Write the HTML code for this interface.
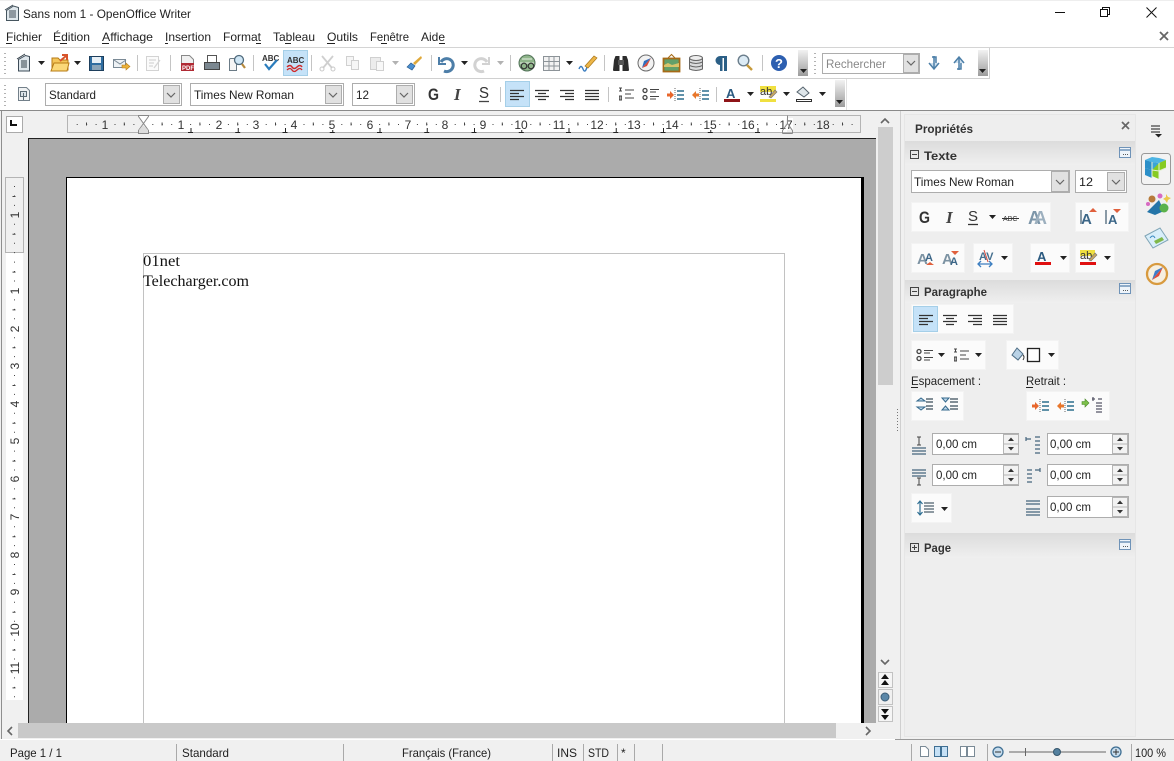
<!DOCTYPE html>
<html lang="fr"><head><meta charset="utf-8"><title>Sans nom 1 - OpenOffice Writer</title>
<style>
html,body{margin:0;padding:0;background:#fff;width:1174px;height:761px;overflow:hidden}
svg{display:block;position:absolute;left:0;top:0}
text{font-family:"Liberation Sans",sans-serif;font-size:12px;fill:#222}
.b{font-weight:bold;fill:#333}
.r{font-size:12px;fill:#333;text-anchor:middle}
.d{font-family:"Liberation Serif",serif;font-size:16px;fill:#111}
.sep{stroke:#c4c4c4;stroke-width:1}
.cb{fill:#fff;stroke:#adadad}
.dd{fill:#e1e1e1;stroke:#adadad}
.tb{fill:#fbfbfb;stroke:#f3f3f3}
.act{fill:#c5e2f8;stroke:#a5cfe8}
.u{stroke:#222;stroke-width:1}
</style></head><body>
<svg width="1174" height="761" viewBox="0 0 1174 761" xmlns="http://www.w3.org/2000/svg">
<defs>
<linearGradient id="grip" x1="0" y1="0" x2="0" y2="1"><stop offset="0" stop-color="#f2f2f2"/><stop offset="1" stop-color="#9c9c9c"/></linearGradient>
<linearGradient id="hd" x1="0" y1="0" x2="0" y2="1"><stop offset="0" stop-color="#dcdcdc"/><stop offset="1" stop-color="#efefef"/></linearGradient>
<symbol id="ar" viewBox="0 0 8 4" width="8" height="4" overflow="visible"><path d="M0 0h7l-3.5 4z" fill="#222"/></symbol>
<symbol id="chev" viewBox="0 0 16 20" width="16" height="20"><path d="M4 8l4 4 4-4" fill="none" stroke="#666" stroke-width="1.2"/></symbol>
<symbol id="al" viewBox="0 0 16 12" width="16" height="12"><path d="M1 1.5h14M1 4.5h9M1 7.5h14M1 10.5h9" stroke="#333" stroke-width="1.2"/></symbol>
<symbol id="ac" viewBox="0 0 16 12" width="16" height="12"><path d="M1 1.5h14M4 4.5h8M1 7.5h14M4 10.5h8" stroke="#333" stroke-width="1.2"/></symbol>
<symbol id="ax" viewBox="0 0 16 12" width="16" height="12"><path d="M1 1.5h14M6 4.5h9M1 7.5h14M6 10.5h9" stroke="#333" stroke-width="1.2"/></symbol>
<symbol id="aj" viewBox="0 0 16 12" width="16" height="12"><path d="M1 1.5h14M1 4.5h14M1 7.5h14M1 10.5h14" stroke="#333" stroke-width="1.2"/></symbol>
<symbol id="num" viewBox="0 0 18 14" width="18" height="14"><path d="M2 1h3M3.500 1v3M2 4h3M2 9h3M2.700 9v4M4.300 9v4M2 13h3M8 3h9M8 7h6M8 11h9" stroke="#444" fill="none"/></symbol>
<symbol id="bul" viewBox="0 0 18 14" width="18" height="14"><circle cx="3" cy="3.500" r="2" fill="none" stroke="#444" stroke-width="1.300"/><circle cx="3" cy="10.500" r="2" fill="none" stroke="#444" stroke-width="1.300"/><path d="M8 2.500h9M8 5h6M8 9.500h9M8 12h6" stroke="#444"/></symbol>
<symbol id="ind" viewBox="0 0 18 16" width="18" height="16"><path d="M8 1v14" stroke="#666" stroke-dasharray="1 1"/><path d="M10 4h7M10 8h7M10 12h7" stroke="#2d6f8e" stroke-width="1.600"/><path d="M7 8L3 4v2.500H0v3h3V12z" fill="#e8672c"/></symbol>
<symbol id="oud" viewBox="0 0 18 16" width="18" height="16"><path d="M8 1v14" stroke="#666" stroke-dasharray="1 1"/><path d="M10 4h7M10 8h7M10 12h7" stroke="#2d6f8e" stroke-width="1.600"/><path d="M0 8l4-4v2.500h3v3H4V12z" fill="#e8772c"/></symbol>
<symbol id="spin" viewBox="0 0 16 20" width="16" height="20"><rect x=".5" y=".5" width="15" height="19" fill="#f2f2f2" stroke="#b5b5b5"/><path d="M1 10h14" stroke="#b5b5b5"/><path d="M5 7l3-3.500L11 7z" fill="#333"/><path d="M5 13l3 3.500 3-3.500z" fill="#333"/></symbol>
<symbol id="more" viewBox="0 0 12 11" width="12" height="11"><rect x=".5" y=".5" width="11" height="10" fill="#eef4fa" stroke="#6f93b8"/><path d="M1 3h10" stroke="#6f93b8" stroke-width="1.500"/><path d="M4 7.500h.8M6 7.500h.8M8 7.500h.8" stroke="#333"/></symbol>
</defs>

<!-- base -->
<rect width="1174" height="761" fill="#fff"/>
<rect y="0" width="1174" height="1" fill="#eee"/>

<!-- title bar -->
<path d="M6.500 10.500l7-4.500 5 1.500v13h-12z" fill="#dfe7ec" stroke="#46555f"/><path d="M5 10l8-5M9 11h7M9 13h7M9 15h7M9 17h7" stroke="#3c4a55" fill="none"/>
<text x="23" y="18" textLength="168" lengthAdjust="spacingAndGlyphs">Sans nom 1 - OpenOffice Writer</text>
<path d="M1055 12.500h10" stroke="#111"/>
<path d="M1100.500 9.500h7v7h-7zM1102.500 9.500v-2h7v7h-2" fill="none" stroke="#111"/>
<path d="M1146.500 7.500l10 10M1156.500 7.500l-10 10" stroke="#111" fill="none"/>

<!-- menu -->
<text x="6" y="41" textLength="36" lengthAdjust="spacingAndGlyphs">Fichier</text><path class="u" d="M6 43.500h6"/>
<text x="53" y="41" textLength="37" lengthAdjust="spacingAndGlyphs">Édition</text><path class="u" d="M60 43.500h7"/>
<text x="102" y="41" textLength="51" lengthAdjust="spacingAndGlyphs">Affichage</text><path class="u" d="M102 43.500h7"/>
<text x="165" y="41" textLength="46" lengthAdjust="spacingAndGlyphs">Insertion</text><path class="u" d="M165 43.500h3"/>
<text x="223" y="41" textLength="38" lengthAdjust="spacingAndGlyphs">Format</text><path class="u" d="M256 43.500h5"/>
<text x="273" y="41" textLength="42" lengthAdjust="spacingAndGlyphs">Tableau</text><path class="u" d="M285 43.500h6"/>
<text x="327" y="41" textLength="31" lengthAdjust="spacingAndGlyphs">Outils</text><path class="u" d="M327 43.500h8"/>
<text x="370" y="41" textLength="39" lengthAdjust="spacingAndGlyphs">Fenêtre</text><path class="u" d="M381 43.500h6"/>
<text x="421" y="41" textLength="24" lengthAdjust="spacingAndGlyphs">Aide</text><path class="u" d="M439 43.500h6"/>
<path d="M1160 32l8 8M1168 32l-8 8" stroke="#666" stroke-width="1.800"/>

<!-- toolbar frames -->
<rect x="0" y="47" width="1174" height="1" fill="#d4d4d4"/>
<rect x="0" y="78" width="990" height="1" fill="#d0d0d0"/>
<rect x="989" y="48" width="1" height="30" fill="#d0d0d0"/>
<rect x="846" y="79" width="1" height="31" fill="#e2e2e2"/>
<rect x="798" y="50" width="10" height="26" fill="url(#grip)"/><use href="#ar" x="800" y="69"/>
<rect x="978" y="50" width="10" height="26" fill="url(#grip)"/><use href="#ar" x="979" y="69"/>
<rect x="835" y="80" width="10" height="27" fill="url(#grip)"/><use href="#ar" x="836" y="100"/>
<path d="M5 53v22" stroke="#666" stroke-dasharray="1 3"/>
<path d="M5 85v22" stroke="#666" stroke-dasharray="1 3"/>
<path d="M815 53v22" stroke="#666" stroke-dasharray="1 3"/>

<!-- toolbar 1 icons -->
<g class="sep"><path d="M137.500 55v16M170.500 55v16M253.500 55v16M311.500 55v16M431.500 55v16M510.500 55v16M604.500 55v16M762.500 55v16"/></g>
<path d="M18.500 59.500l7-4 4 1v14.500h-11z" fill="#dfe7ec" stroke="#3e4c58"/><path d="M17 59l8-5M21 61h6M21 63h6M21 65h6M21 67h6" stroke="#2f3c46" fill="none"/><use href="#ar" x="38" y="61"/>
<path d="M52 58h6l2 2h8v10H52z" fill="#f4c65a" stroke="#b77b15"/><path d="M51 71l3-8h15l-2 8z" fill="#fbd878" stroke="#b77b15"/><path d="M60 61l6-5M62 55h5v5" stroke="#d8542b" stroke-width="2" fill="none"/><use href="#ar" x="74" y="61"/>
<rect x="89.500" y="56.500" width="14" height="14" fill="#2f6da0" stroke="#1d3e5c"/><rect x="92" y="57" width="9" height="6" fill="#e8f0f6"/><rect x="92" y="65" width="9" height="5" fill="#8aa4b8"/>
<rect x="113.500" y="59.500" width="12" height="8" fill="#eef2f5" stroke="#7b8a96"/><path d="M114 60l6 4 6-4" fill="none" stroke="#7b8a96"/><path d="M122 65h4v-2l4 3.500-4 3.500v-2h-4z" fill="#eab13a" stroke="#b77b15" stroke-width=".6"/>
<rect x="146.500" y="56.500" width="12" height="14" fill="#fbfbfb" stroke="#d3d3d3"/><path d="M149 60h7M149 63h5M149 66h4M154 68l6-8" stroke="#d5d5d5" stroke-width="1.300"/>
<path d="M181.500 55.500h8l4 4v11h-12z" fill="#f0f0f0" stroke="#888"/><rect x="181" y="63" width="13" height="8" fill="#b02a34"/><text x="182" y="70" style="font-size:6px;font-weight:bold;fill:#fff">PDF</text>
<rect x="207.500" y="55.500" width="9" height="8" fill="#fff" stroke="#555"/><rect x="204.500" y="62.500" width="15" height="7" fill="#7b8790" stroke="#444"/>
<path d="M230.500 58.500h6v12h-7V59z" fill="#f5f5f5" stroke="#6b7b86"/><circle cx="239" cy="60" r="4.500" fill="#cfe6f5" stroke="#506a7c" stroke-width="1.300"/><path d="M242 64l3 4" stroke="#b78a3d" stroke-width="2.200"/>
<text x="262" y="61" style="font-size:8px;font-weight:bold;fill:#333">ABC</text><path d="M265 64l4 5 8-9" fill="none" stroke="#2b7dbd" stroke-width="2.200"/>
<rect x="283.500" y="50.500" width="24" height="25" class="act"/><text x="287" y="63" style="font-size:8px;font-weight:bold;fill:#333">ABC</text><path d="M287 67q3-3 5 0t5 0 5 0" fill="none" stroke="#d02a2a" stroke-width="1.500"/><path d="M287 70q3-3 5 0t5 0 5 0" fill="none" stroke="#d02a2a" stroke-width="1.300"/>
<path d="M322 56l10 12M333 56l-10 12" stroke="#cfcfcf" stroke-width="1.800"/><circle cx="322" cy="69" r="2" fill="none" stroke="#c9c9c9"/><circle cx="333" cy="69" r="2" fill="none" stroke="#c9c9c9"/>
<rect x="346.500" y="56.500" width="7" height="9" fill="#f6f6f6" stroke="#d0d0d0"/><rect x="351.500" y="60.500" width="7" height="9" fill="#f6f6f6" stroke="#d0d0d0"/>
<rect x="370.500" y="57.500" width="10" height="12" fill="#ececec" stroke="#d0d0d0"/><rect x="376.500" y="61.500" width="7" height="9" fill="#f8f8f8" stroke="#d0d0d0"/><use href="#ar" x="392" y="61" opacity=".35"/>
<path d="M407 67l5 3 3-4-4-3z" fill="#4a8fd1" stroke="#2a5c8d" stroke-width=".7"/><path d="M413 63l8-7 1 2-7 7z" fill="#e0a93a"/>
<path d="M439 57v7h7" fill="none" stroke="#4d7ea8" stroke-width="2"/><path d="M441 62a6.500 6.500 0 1 1 3 9" fill="none" stroke="#4d7ea8" stroke-width="3"/><use href="#ar" x="461" y="61"/>
<path d="M489 57v7h-7" fill="none" stroke="#d2d2d2" stroke-width="2"/><path d="M487 62a6.500 6.500 0 1 0-3 9" fill="none" stroke="#d2d2d2" stroke-width="3"/><use href="#ar" x="497" y="61" opacity=".35"/>
<circle cx="527" cy="63" r="8" fill="#8fb58a" stroke="#54745a"/><path d="M520 63h14M522 59h10" stroke="#e5f0e2"/><circle cx="524" cy="66" r="2.800" fill="none" stroke="#333" stroke-width="1.200"/><circle cx="531" cy="66" r="2.800" fill="none" stroke="#333" stroke-width="1.200"/>
<path d="M543.500 56.500h16v14h-16zM543.500 61.500h16M543.500 66h16M549 56.500v14M554 56.500v14" fill="#f2f2f2" stroke="#8c9398"/><use href="#ar" x="566" y="61"/>
<path d="M579 69q2-5 4 0t4-2" fill="none" stroke="#3c7ec0" stroke-width="1.400"/><path d="M585 66l9-10 3 2-9 10z" fill="#edb648" stroke="#a9761a" stroke-width=".7"/>
<path d="M613 70l1-10 1.500-4h4v15h-6zM629 70l-1-10-1.500-4h-4v15h6z" fill="#2c2c2c"/><rect x="618" y="60" width="6" height="5" fill="#555"/>
<circle cx="646" cy="63" r="8" fill="#f2f2f2" stroke="#6b6b6b"/><path d="M651 58l-7 3-2 7z" fill="#2f6ebd"/><path d="M651 58l-4 8-5 2z" fill="#d84a3a"/>
<rect x="663.500" y="58.500" width="16" height="13" fill="#62a06a" stroke="#a66a16" stroke-width="1.800"/><path d="M664 65l4-2 4 2 7-2v4h-15z" fill="#d8c46a"/><path d="M668 58l3.500-3.500 3.500 3.500" fill="none" stroke="#a66a16"/>
<path d="M689.500 58v11q6.500 3 13 0V58" fill="#d9dadb" stroke="#666"/><ellipse cx="696" cy="58" rx="6.500" ry="2.500" fill="#eee" stroke="#666"/><path d="M689.500 62q6.500 3 13 0M689.500 65.500q6.500 3 13 0" fill="none" stroke="#666"/>
<path d="M727 56h-7a4.500 4.500 0 0 0 0 9v6h2.500V58h1.500v13H727z" fill="#2b5f86"/>
<circle cx="743.500" cy="60.500" r="5.300" fill="#dcebf5" stroke="#6b7e8c" stroke-width="1.400"/><path d="M747 65l5 5" stroke="#c79a3a" stroke-width="2.400"/>
<circle cx="779" cy="63" r="8" fill="#2d5fb0"/><text x="775" y="68" style="font-size:13px;font-weight:bold;fill:#fff">?</text>

<!-- search -->
<rect x="822.500" y="53.500" width="97" height="20" class="cb"/><rect x="903.500" y="54.500" width="15" height="18" class="dd"/><use href="#chev" x="903" y="53"/>
<text x="826" y="68" style="fill:#888" textLength="60" lengthAdjust="spacingAndGlyphs">Rechercher</text>
<path d="M934 56v12M929 63l5 6 5-6M932 57h4v6" fill="#cfe0ee" stroke="#4c7fa8" stroke-width="1.500"/>
<path d="M959 70V58M954 63l5-6 5 6M957 69h4v-6" fill="#cfe0ee" stroke="#4c7fa8" stroke-width="1.500"/>

<!-- toolbar 2 -->
<path d="M18.500 87.500h8l3 3v10h-11z" fill="#f0f2f3" stroke="#73808a"/><rect x="20.500" y="91.500" width="6" height="5" fill="#dce3e8" stroke="#5c6a74"/><path d="M23.500 93v7" stroke="#5c6a74"/>
<rect x="45.500" y="83.500" width="136" height="22" class="cb"/><rect x="163.500" y="85.500" width="16" height="18" class="dd"/><use href="#chev" x="163" y="85"/>
<text x="49" y="99" textLength="47" lengthAdjust="spacingAndGlyphs">Standard</text>
<rect x="190.500" y="83.500" width="153" height="22" class="cb"/><rect x="325.500" y="85.500" width="16" height="18" class="dd"/><use href="#chev" x="325" y="85"/>
<text x="194" y="99" textLength="100" lengthAdjust="spacingAndGlyphs">Times New Roman</text>
<rect x="352.500" y="83.500" width="62" height="22" class="cb"/><rect x="396.500" y="85.500" width="16" height="18" class="dd"/><use href="#chev" x="396" y="85"/>
<text x="356" y="99" textLength="13" lengthAdjust="spacingAndGlyphs">12</text>
<text x="428" y="100" textLength="11" lengthAdjust="spacingAndGlyphs" style="font-size:17px;font-weight:bold;fill:#333">G</text>
<text x="454" y="100" style="font-family:'Liberation Serif',serif;font-size:17px;font-weight:bold;font-style:italic;fill:#444">I</text>
<text x="479" y="98" textLength="10" lengthAdjust="spacingAndGlyphs" style="font-size:16px;fill:#333">S</text><path d="M479 101.500h10" stroke="#444" stroke-width="1.300"/>
<path class="sep" d="M500.500 87v15M608.500 87v15M716.500 87v15"/>
<rect x="505.500" y="81.500" width="24" height="25" class="act"/>
<use href="#al" x="509" y="89"/><use href="#ac" x="534" y="89"/><use href="#ax" x="559" y="89"/><use href="#aj" x="584" y="89"/>
<use href="#num" x="617" y="87"/><use href="#bul" x="642" y="87"/><use href="#ind" x="667" y="87"/><use href="#oud" x="692" y="87" />
<text x="726" y="98" style="font-size:13px;font-weight:bold;fill:#2b5a80">A</text><rect x="724" y="99" width="16" height="3" fill="#8e1418"/><use href="#ar" x="747" y="92"/>
<rect x="760" y="86" width="16" height="6" fill="#f0e040"/><rect x="760" y="99" width="16" height="3" fill="#f0e040"/><text x="760" y="95" style="font-size:11px;fill:#333">ab</text><path d="M769 97l6-7 2 2-6 6z" fill="#c9a75f" stroke="#777" stroke-width=".6"/><use href="#ar" x="783" y="92"/>
<path d="M797 92l6-5 6 6-5 4z" fill="#dfe6ea" stroke="#55636d"/><rect x="796.500" y="99.500" width="15" height="2" fill="#fff" stroke="#333"/><use href="#ar" x="819" y="92"/>

<!-- dark separator and workspace -->
<rect x="0" y="111" width="1174" height="650" fill="#f0f0f0"/>
<rect x="0" y="110" width="1174" height="1" fill="#8a8a8a"/>
<rect x="1" y="111" width="1" height="628" fill="#8e8e8e"/>

<!-- ruler corner -->
<rect x="6.500" y="116.500" width="16" height="16" fill="#fff" stroke="#aaa"/><path d="M11 120v5h6" fill="none" stroke="#111" stroke-width="2"/>

<!-- horizontal ruler -->
<rect x="67.500" y="115.500" width="793" height="17" fill="#f0f0f0" stroke="#b4b4b4"/>
<rect x="143" y="116" width="644" height="16" fill="#fff"/>
<path d="M76.700 124.500H861" stroke="#444" stroke-dasharray="1 8.450"/>
<path d="M86 124H861" stroke="#444" stroke-width="3" stroke-dasharray="1 36.800"/>
<path d="M190.500 130H787" stroke="#222" stroke-width="4" stroke-dasharray="1 46.250"/>
<path d="M188 132.500H787" stroke="#222" stroke-dasharray="5 42.250"/>
<g>
<rect x="100" y="118" width="10" height="13" fill="#f0f0f0"/>
<rect x="176" y="118" width="10" height="12" fill="#fff"/><rect x="214" y="118" width="10" height="12" fill="#fff"/><rect x="251" y="118" width="10" height="12" fill="#fff"/><rect x="289" y="118" width="10" height="12" fill="#fff"/><rect x="327" y="118" width="10" height="12" fill="#fff"/><rect x="365" y="118" width="10" height="12" fill="#fff"/><rect x="403" y="118" width="10" height="12" fill="#fff"/><rect x="440" y="118" width="10" height="12" fill="#fff"/><rect x="478" y="118" width="10" height="12" fill="#fff"/><rect x="514" y="118" width="14" height="12" fill="#fff"/><rect x="552" y="118" width="14" height="12" fill="#fff"/><rect x="590" y="118" width="14" height="12" fill="#fff"/><rect x="627" y="118" width="14" height="12" fill="#fff"/><rect x="665" y="118" width="14" height="12" fill="#fff"/><rect x="703" y="118" width="14" height="12" fill="#fff"/><rect x="741" y="118" width="14" height="12" fill="#fff"/><rect x="779" y="118" width="14" height="12" fill="#fff"/><rect x="816" y="118" width="14" height="13" fill="#f0f0f0"/>
</g>
<text class="r" x="105" y="129">1</text><text class="r" x="181" y="129">1</text><text class="r" x="219" y="129">2</text><text class="r" x="256" y="129">3</text><text class="r" x="294" y="129">4</text><text class="r" x="332" y="129">5</text><text class="r" x="370" y="129">6</text><text class="r" x="408" y="129">7</text><text class="r" x="445" y="129">8</text><text class="r" x="483" y="129">9</text><text class="r" x="521" y="129">10</text><text class="r" x="559" y="129">11</text><text class="r" x="597" y="129">12</text><text class="r" x="634" y="129">13</text><text class="r" x="672" y="129">14</text><text class="r" x="710" y="129">15</text><text class="r" x="748" y="129">16</text><text class="r" x="786" y="129">17</text><text class="r" x="823" y="129">18</text>
<path d="M138.500 115.500h10v1l-5 7 5 7v3h-10v-3l5-7-5-7z" fill="#fff" stroke="#888"/><path d="M139 130l4-5 5 5v3h-9z" fill="#ddd"/>
<path d="M782.500 133.500v-3l5-7v-8M792.500 133.500v-3l-5-7M782.500 133.500h10" fill="#eee" stroke="#888"/>

<!-- vertical ruler -->
<rect x="6" y="253" width="17" height="447" fill="#fff"/>
<rect x="5.500" y="177.500" width="18" height="75" fill="#f0f0f0" stroke="#b4b4b4"/>
<path d="M14.500 186V700" stroke="#444" stroke-dasharray="1 8.450"/>
<path d="M14 196V700" stroke="#444" stroke-width="3" stroke-dasharray="1 36.800"/>
<g>
<rect x="10" y="210" width="10" height="10" fill="#f0f0f0"/>
<rect x="10" y="286" width="10" height="10" fill="#fff"/><rect x="10" y="324" width="10" height="10" fill="#fff"/><rect x="10" y="361" width="10" height="10" fill="#fff"/><rect x="10" y="399" width="10" height="10" fill="#fff"/><rect x="10" y="436" width="10" height="10" fill="#fff"/><rect x="10" y="474" width="10" height="10" fill="#fff"/><rect x="10" y="512" width="10" height="10" fill="#fff"/><rect x="10" y="550" width="10" height="10" fill="#fff"/><rect x="10" y="587" width="10" height="10" fill="#fff"/><rect x="10" y="623" width="10" height="14" fill="#fff"/><rect x="10" y="661" width="10" height="14" fill="#fff"/>
</g>
<text class="r" transform="translate(19 215) rotate(-90)">1</text><text class="r" transform="translate(19 291) rotate(-90)">1</text><text class="r" transform="translate(19 329) rotate(-90)">2</text><text class="r" transform="translate(19 366) rotate(-90)">3</text><text class="r" transform="translate(19 404) rotate(-90)">4</text><text class="r" transform="translate(19 441) rotate(-90)">5</text><text class="r" transform="translate(19 479) rotate(-90)">6</text><text class="r" transform="translate(19 517) rotate(-90)">7</text><text class="r" transform="translate(19 555) rotate(-90)">8</text><text class="r" transform="translate(19 592) rotate(-90)">9</text><text class="r" transform="translate(19 630) rotate(-90)">10</text><text class="r" transform="translate(19 668) rotate(-90)">11</text>

<!-- document -->
<rect x="28" y="138" width="848" height="585" fill="#ababab"/>
<rect x="28" y="138" width="848" height="1" fill="#222"/>
<rect x="28" y="138" width="1" height="585" fill="#222"/>
<rect x="66.500" y="177.500" width="795" height="560" fill="#fff" stroke="#000"/>
<rect x="861" y="177" width="3" height="546" fill="#000"/>
<path d="M143.500 723V253.500H784.500V723" fill="none" stroke="#c2c2c2"/>
<text class="d" x="143" y="266" textLength="37" lengthAdjust="spacingAndGlyphs">01net</text>
<text class="d" x="143" y="286" textLength="106" lengthAdjust="spacingAndGlyphs">Telecharger.com</text>

<!-- vertical scrollbar -->
<rect x="877" y="111" width="17" height="612" fill="#f0f0f0"/>
<rect x="878" y="127" width="15" height="258" fill="#cdcdcd"/>
<path d="M881 123l4-4 4 4" fill="none" stroke="#666" stroke-width="1.600"/>
<path d="M881 660l4 4 4-4" fill="none" stroke="#666" stroke-width="1.600"/>
<rect x="878.500" y="672.500" width="14" height="15" fill="#f5f5f5" stroke="#c2c2c2"/><path d="M881 679l4-5 4 5zM881 685l4-5 4 5z" fill="#111"/>
<rect x="878.500" y="689.500" width="14" height="15" fill="#f0f0f0" stroke="#c2c2c2"/><circle cx="885" cy="697" r="4" fill="#5b87a8" stroke="#3e5f78"/>
<rect x="878.500" y="706.500" width="14" height="15" fill="#f5f5f5" stroke="#c2c2c2"/><path d="M881 709l4 5 4-5zM881 715l4 5 4-5z" fill="#111"/>

<!-- horizontal scrollbar -->
<rect x="2" y="723" width="892" height="16" fill="#f0f0f0"/>
<rect x="18" y="723" width="818" height="15" fill="#c9c9c9"/>
<path d="M12 727l-4 4 4 4" fill="none" stroke="#666" stroke-width="1.600"/>
<path d="M866 727l4 4-4 4" fill="none" stroke="#666" stroke-width="1.600"/>

<!-- splitter -->
<path d="M897.500 409v22" stroke="#777" stroke-dasharray="1 2"/>
<rect x="900" y="111" width="1" height="628" fill="#cfcfcf"/>

<!-- sidebar panel -->
<rect x="904.500" y="114.500" width="231" height="622" fill="#eee" stroke="#e6e6e6"/>
<text class="b" x="915" y="133" textLength="58" lengthAdjust="spacingAndGlyphs">Propriétés</text>
<path d="M1122 122l7 7M1129 122l-7 7" stroke="#666" stroke-width="1.700"/>

<rect x="905" y="141" width="230" height="24" fill="url(#hd)"/>
<path d="M910.500 150.500h8v8h-8zM912 154.500h5" fill="none" stroke="#444"/>
<text class="b" x="924" y="160" textLength="33" lengthAdjust="spacingAndGlyphs">Texte</text>
<use href="#more" x="1119" y="147"/>

<rect x="911.500" y="170.500" width="158" height="22" class="cb"/><rect x="1051.500" y="171.500" width="17" height="20" class="dd"/><use href="#chev" x="1052" y="172"/>
<text x="914" y="186" textLength="100" lengthAdjust="spacingAndGlyphs">Times New Roman</text>
<rect x="1075.500" y="170.500" width="51" height="22" class="cb"/><rect x="1107.500" y="172.500" width="17" height="18" class="dd"/><use href="#chev" x="1108" y="172"/>
<text x="1079" y="186" textLength="14" lengthAdjust="spacingAndGlyphs">12</text>

<rect x="911.500" y="202.500" width="139" height="29" class="tb"/>
<rect x="1075.500" y="202.500" width="53" height="29" class="tb"/>
<text x="919" y="223" textLength="11" lengthAdjust="spacingAndGlyphs" style="font-size:17px;font-weight:bold;fill:#333">G</text>
<text x="946" y="223" style="font-family:'Liberation Serif',serif;font-size:17px;font-weight:bold;font-style:italic;fill:#444">I</text>
<text x="968" y="221" style="font-size:15px;fill:#333">S</text><path d="M968 224.500h10" stroke="#333" stroke-width="1.300"/>
<use href="#ar" x="989" y="215"/>
<text x="1003" y="221" style="font-size:7px;fill:#333">ABC</text><path d="M1002 218.500h17" stroke="#333"/>
<text x="1028" y="224" style="font-size:18px;font-weight:bold;fill:#7d96a9">A</text><text x="1034" y="224" style="font-size:18px;font-weight:bold;fill:#9db0bf">A</text>
<text x="1081" y="224" style="font-size:15px;font-weight:bold;fill:#3d6788">A</text><path d="M1081 210v14" stroke="#8a9aa6" stroke-width="2"/><path d="M1089 212l4-4 4 4z" fill="#e0603d"/>
<text x="1108" y="224" style="font-size:13px;font-weight:bold;fill:#3d6788">A</text><path d="M1106 210v14" stroke="#8a9aa6" stroke-width="2"/><path d="M1113 209h8l-4 4z" fill="#e0603d"/>

<rect x="911.500" y="243.500" width="53" height="29" class="tb"/>
<rect x="973.500" y="243.500" width="39" height="29" class="tb"/>
<rect x="1030.500" y="243.500" width="39" height="29" class="tb"/>
<rect x="1075.500" y="243.500" width="39" height="29" class="tb"/>
<text x="917" y="264" style="font-size:15px;font-weight:bold;fill:#7d93a3">A</text><text x="925" y="261" style="font-size:11px;font-weight:bold;fill:#3d6788">A</text><path d="M926 265l4-3 4 3z" fill="#e0603d"/>
<text x="942" y="264" style="font-size:15px;font-weight:bold;fill:#7d93a3">A</text><text x="950" y="265" style="font-size:11px;font-weight:bold;fill:#3d6788">A</text><path d="M951 251h8l-4 4z" fill="#e0603d"/>
<text x="979" y="260" style="font-size:11px;font-weight:bold;fill:#46708f">AV</text><path d="M984 250l4 12" stroke="#d84a3a"/><path d="M978 264h14M981 261l-3 3 3 3M989 261l3 3-3 3" fill="none" stroke="#3c7ec0" stroke-width="1.300"/><use href="#ar" x="1001" y="256"/>
<text x="1037" y="261" style="font-size:13px;font-weight:bold;fill:#2b5a80">A</text><rect x="1035" y="262" width="16" height="3" fill="#e01010"/><use href="#ar" x="1060" y="256"/>
<rect x="1080" y="250" width="15" height="6" fill="#f0e040"/><rect x="1080" y="262" width="16" height="3" fill="#e01010"/><text x="1080" y="259" style="font-size:11px;fill:#333">ab</text><path d="M1089 260l6-7 2 2-6 6z" fill="#c9a75f" stroke="#777" stroke-width=".6"/><use href="#ar" x="1104" y="256"/>

<!-- Paragraphe -->
<rect x="905" y="280" width="230" height="23" fill="url(#hd)"/>
<path d="M910.500 287.500h8v8h-8zM912 291.500h5" fill="none" stroke="#444"/>
<text class="b" x="924" y="296" textLength="63" lengthAdjust="spacingAndGlyphs">Paragraphe</text>
<use href="#more" x="1119" y="283"/>

<rect x="911.500" y="304.500" width="102" height="29" class="tb"/>
<rect x="913.500" y="306.500" width="24" height="25" class="act"/>
<use href="#al" x="918" y="314"/><use href="#ac" x="942" y="314"/><use href="#ax" x="967" y="314"/><use href="#aj" x="992" y="314"/>

<rect x="911.500" y="340.500" width="74" height="29" class="tb"/>
<rect x="1006.500" y="340.500" width="52" height="29" class="tb"/>
<use href="#bul" x="916" y="348"/><use href="#ar" x="938" y="353"/>
<use href="#num" x="952" y="348"/><use href="#ar" x="975" y="353"/>
<path d="M1012 355l5-7 6 6-5 6z" fill="#b9d2e6" stroke="#4f6e86"/><path d="M1023 355q2 2 0 5" fill="none" stroke="#333"/>
<rect x="1027.500" y="348.500" width="12" height="13" fill="#fff" stroke="#222" stroke-width="1.300"/><use href="#ar" x="1048" y="353"/>

<text x="911" y="385" textLength="70" lengthAdjust="spacingAndGlyphs">Espacement :</text><path class="u" d="M911 387.500h7"/>
<text x="1026" y="385" textLength="40" lengthAdjust="spacingAndGlyphs">Retrait :</text><path class="u" d="M1026 387.500h7"/>

<rect x="911.500" y="391.500" width="52" height="29" class="tb"/>
<rect x="1026.500" y="391.500" width="83" height="29" class="tb"/>
<path d="M917 401l4-3 4 3zM917 407l4 3 4-3z" fill="#bcd6ea" stroke="#35698c"/><path d="M926 399h7M926 402h7M926 406h7M926 409h7" stroke="#3a4c5a" stroke-width="1.300"/>
<path d="M942 398h7l-3.500 4zM942 410h7l-3.500-4z" fill="#bcd6ea" stroke="#35698c"/><path d="M950 399h8M950 402h8M950 406h8M950 409h8" stroke="#3a4c5a" stroke-width="1.300"/>
<use href="#ind" x="1032" y="398"/><use href="#oud" x="1057" y="398"/>
<path d="M1082 403l4-4v2.500h3v3h-3V407z" fill="#7cc04a" stroke="#4b8a2a" stroke-width=".6" transform="matrix(-1 0 0 1 2171 0)"/><path d="M1092 399h3M1093 397v4M1098 399h4M1096 403h6M1096 406h6M1096 409h6M1096 412h6" stroke="#556" stroke-width="1.200"/>

<!-- spin rows -->
<path d="M912 448h14M912 451h14M912 454h14" stroke="#46657d" stroke-width="1.300"/><path d="M917 437h4M919 437v8M917 445h4" stroke="#444"/>
<rect x="932.500" y="433.500" width="86" height="21" class="cb"/><use href="#spin" x="1003" y="434"/><text x="936" y="448" textLength="41" lengthAdjust="spacingAndGlyphs">0,00 cm</text>
<path d="M1026 439h5M1026 437v4M1035 437h5M1035 441h5M1035 445h5M1035 449h5M1035 453h5" stroke="#46657d" stroke-width="1.200"/>
<rect x="1047.500" y="433.500" width="81" height="21" class="cb"/><use href="#spin" x="1112" y="434"/><text x="1050" y="448" textLength="41" lengthAdjust="spacingAndGlyphs">0,00 cm</text>

<path d="M912 470h14M912 473h14M912 476h14" stroke="#46657d" stroke-width="1.300"/><path d="M917 478h4M919 478v7M917 485h4" stroke="#444"/>
<rect x="932.500" y="464.500" width="86" height="21" class="cb"/><use href="#spin" x="1003" y="465"/><text x="936" y="479" textLength="41" lengthAdjust="spacingAndGlyphs">0,00 cm</text>
<path d="M1027 470h5M1027 474h5M1027 478h5M1027 482h5M1035 470h5M1040 468v4" stroke="#46657d" stroke-width="1.200"/>
<rect x="1047.500" y="464.500" width="81" height="21" class="cb"/><use href="#spin" x="1112" y="465"/><text x="1050" y="479" textLength="41" lengthAdjust="spacingAndGlyphs">0,00 cm</text>

<rect x="911.500" y="493.500" width="40" height="29" class="tb"/>
<path d="M920 502v12M917.500 504l2.500-3 2.500 3M917.500 512l2.500 3 2.500-3" fill="none" stroke="#2e6f93" stroke-width="1.200"/><path d="M924 503h10M924 506h10M924 509h10M924 512h10" stroke="#4e5f6c" stroke-width="1.200"/><use href="#ar" x="941" y="507"/>
<path d="M1026 501h14M1026 504h14M1026 509h14M1026 512h14M1026 515h14" stroke="#46657d" stroke-width="1.200"/>
<rect x="1047.500" y="496.500" width="81" height="21" class="cb"/><use href="#spin" x="1112" y="497"/><text x="1050" y="511" textLength="41" lengthAdjust="spacingAndGlyphs">0,00 cm</text>

<!-- Page -->
<rect x="905" y="533" width="230" height="25" fill="url(#hd)"/>
<path d="M910.500 543.500h8v8h-8zM912 547.500h5M914.500 545v5" fill="none" stroke="#444"/>
<text class="b" x="924" y="552" textLength="27" lengthAdjust="spacingAndGlyphs">Page</text>
<use href="#more" x="1119" y="539"/>

<!-- sidebar tabs -->
<path d="M1151 126h9M1151 129h9M1151 132h9" stroke="#444" stroke-width="1.200"/><path d="M1155 134h7l-3.500 3.500z" fill="#222"/>
<rect x="1141.500" y="153.500" width="29" height="31" rx="3" fill="#f3f3f3" stroke="#999"/>
<path d="M1145 160l7-3 7 1 7 2-7 3-7-1z" fill="#4db4e4"/><path d="M1145 160l7 2v8l-7-2z" fill="#2b8fc8"/><path d="M1152 162l7 1v7l-7 0z" fill="#3aa4d8"/><path d="M1152 170l7-7 7-3v8l-7 3v8l-7-3z" fill="#86cb22"/><path d="M1145 168l7 2v8l-7-3z" fill="#2b8fc8"/><path d="M1159 163v16M1152 170l7 1 7-3M1152 162v16" stroke="#e4f0d8" fill="none"/>
<path d="M1147 212l12-12 5 11-9 4z" fill="#2475a8"/><circle cx="1152" cy="199" r="3.500" fill="#b77a3a"/><circle cx="1160" cy="196" r="2.500" fill="#d76ac2"/><path d="M1166 194l2 3 3 1-3 2-1 3-2-3-2-1 3-2z" fill="#ecc84a"/><circle cx="1164" cy="208" r="4.500" fill="#5bb24a"/><circle cx="1148" cy="204" r="2" fill="#d76ac2"/>
<path d="M1145 236l15-8 8 12-15 8z" fill="#d8eefa" stroke="#80a5b6"/><path d="M1154 241l8-4 2 3-8 4z" fill="#80b84a"/><path d="M1150 238q3-4 5 0" fill="none" stroke="#3a88c0"/>
<circle cx="1157" cy="274" r="10" fill="#f6efe0" stroke="#d89a3e" stroke-width="2.300"/><path d="M1163 267l-8 4-3 9z" fill="#3d7cc9"/><path d="M1163 267l-4 9-7 4z" fill="#e04a3a"/>

<!-- status bar -->
<rect x="895" y="739" width="279" height="1" fill="#999"/>
<rect x="0" y="739" width="895" height="1" fill="#fff"/>
<rect x="0" y="740" width="1174" height="21" fill="#f0f0f0"/>
<path d="M176.500 744v17M343.500 744v17M552.500 744v17M583.500 744v17M617.500 744v17M634.500 744v17M662.500 744v17M911.500 744v17M987.500 744v17M1131.500 744v17" stroke="#a9a9a9"/>
<text x="10" y="757" textLength="52" lengthAdjust="spacingAndGlyphs">Page 1 / 1</text>
<text x="182" y="757" textLength="47" lengthAdjust="spacingAndGlyphs">Standard</text>
<text x="402" y="757" textLength="89" lengthAdjust="spacingAndGlyphs">Français (France)</text>
<text x="557" y="757" textLength="20" lengthAdjust="spacingAndGlyphs">INS</text>
<text x="588" y="757" textLength="21" lengthAdjust="spacingAndGlyphs">STD</text>
<text x="621" y="757">*</text>
<path d="M920.500 746.500h5l3 3v7h-8z" fill="#fff" stroke="#7a8a96"/>
<path d="M934.500 746.500h6v10h-6zM941.500 746.500h6v10h-6z" fill="#c5e0f5" stroke="#3f6f93"/>
<path d="M960.500 746.500h6v10h-6zM967.500 746.500h7v10h-7z" fill="#fff" stroke="#7a8a96"/>
<circle cx="998" cy="752" r="5" fill="#c6dced" stroke="#3f6f93" stroke-width="1.300"/><path d="M995 752h6" stroke="#333"/>
<path d="M1009 752h97M1025.500 748v8" stroke="#666"/>
<circle cx="1057" cy="752" r="3.500" fill="#54819f" stroke="#36566c"/>
<circle cx="1116" cy="752" r="5" fill="#c6dced" stroke="#3f6f93" stroke-width="1.300"/><path d="M1113 752h6M1116 749v6" stroke="#333"/>
<text x="1135" y="757" textLength="31" lengthAdjust="spacingAndGlyphs">100 %</text>
</svg>
</body></html>
